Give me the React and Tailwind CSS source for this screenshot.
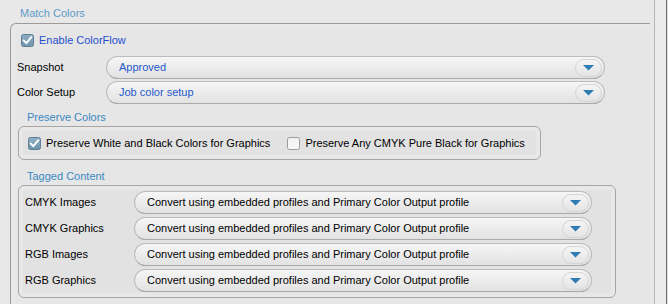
import React from "react";

const font = { fontFamily: '"Liberation Sans", Arial, sans-serif' };

function Check({ checked }) {
  if (checked) {
    return (
      <svg width="13" height="13" viewBox="0 0 13 13" className="shrink-0">
        <defs>
          <linearGradient id="cbg" x1="0" y1="0" x2="0" y2="1">
            <stop offset="0" stopColor="#8eafc4" />
            <stop offset="1" stopColor="#6f95ae" />
          </linearGradient>
        </defs>
        <rect x="0.5" y="0.5" width="12" height="12" rx="2" fill="url(#cbg)" stroke="#5e7f96" />
        <path d="M2.8 6.6 L5.3 9.1 L10.2 3.4" fill="none" stroke="#ffffff" strokeWidth="1.9" strokeLinecap="square" />
      </svg>
    );
  }
  return (
    <svg width="13" height="13" viewBox="0 0 13 13" className="shrink-0">
      <defs>
        <linearGradient id="cbu" x1="0" y1="0" x2="0" y2="1">
          <stop offset="0" stopColor="#f0f0f0" />
          <stop offset="1" stopColor="#fafafa" />
        </linearGradient>
      </defs>
      <rect x="0.5" y="0.5" width="12" height="12" rx="2" fill="url(#cbu)" stroke="#9c9c9c" />
    </svg>
  );
}

function Dropdown({ text, blue, width }) {
  return (
    <div
      className={`h-[23px] rounded-full border border-[#bcbcbc] border-b-[#aaaaaa] bg-gradient-to-b from-[#f6f6f6] to-[#e2e2e2] flex items-center pl-[12px] pr-[2px] ${width}`}
    >
      <span className={`flex-1 text-[11px] leading-none ${blue ? "text-[#2459cc]" : "text-[#000000]"}`}>{text}</span>
      <div className="w-[27px] h-[18px] rounded-full border border-[#d4d4d4] bg-gradient-to-b from-[#f5f5f5] to-[#e4e4e4] flex items-center justify-center">
        <svg width="11" height="6" viewBox="0 0 11 6">
          <path d="M0 0 H11 L5.5 5.5 Z" fill="#2f7cb3" />
        </svg>
      </div>
    </div>
  );
}

export default function App() {
  return (
    <div className="w-[668px] h-[304px] bg-[#e8e8e8] flex overflow-hidden" style={font}>
      <div className="w-[650px] h-full overflow-hidden pl-[10px] shrink-0">
        <div className="h-[23px] pl-[10px] pt-[7px] text-[11px] leading-[13px] text-[#5d9bc9]">Match Colors</div>
        <div className="w-[660px] h-[400px] border-l border-t border-[#9a9a9a] rounded-tl-[6px] bg-[#e8e8e8]">
          <div className="ml-[5px] mt-[5px] h-[395px] bg-[#e6e6e6]">
            <div className="pt-[5px] pl-[5px] flex items-center gap-[5px] h-[13px] box-content">
              <Check checked />
              <span className="text-[11px] leading-none text-[#1f4fcc]">Enable ColorFlow</span>
            </div>
            <div className="mt-[9px] flex items-center">
              <span className="w-[90px] pl-[1px] text-[11px] leading-none text-black">Snapshot</span>
              <Dropdown text="Approved" blue width="w-[499px]" />
            </div>
            <div className="mt-[2px] flex items-center">
              <span className="w-[90px] pl-[1px] text-[11px] leading-none text-black">Color Setup</span>
              <Dropdown text="Job color setup" blue width="w-[499px]" />
            </div>
            <div className="h-[22px] pt-[7px] pl-[11px] text-[11px] leading-[13px] text-[#3a88c2]">Preserve Colors</div>
            <div className="ml-[2px] w-[523px] h-[34px] border border-[#a6a6a6] rounded-[6px] bg-[#e8e8e8] p-[4px]">
              <div className="h-full bg-[#e2e2e2] flex items-center pl-[5px]">
                <Check checked />
                <span className="ml-[5px] text-[11px] leading-none text-black">Preserve White and Black Colors for Graphics</span>
                <div className="ml-[17px] flex items-center">
                  <Check checked={false} />
                  <span className="ml-[5px] text-[11px] leading-none text-black">Preserve Any CMYK Pure Black for Graphics</span>
                </div>
              </div>
            </div>
            <div className="h-[25px] pt-[10px] pl-[11px] text-[11px] leading-[13px] text-[#3a88c2]">Tagged Content</div>
            <div className="ml-[2px] w-[598px] h-[113px] border border-[#a6a6a6] rounded-[6px] bg-[#e8e8e8] p-[4px]">
              <div className="h-full bg-[#e2e2e2] pt-[1px] flex flex-col gap-[3px]">
                {["CMYK Images", "CMYK Graphics", "RGB Images", "RGB Graphics"].map((l) => (
                  <div key={l} className="flex items-center">
                    <span className="w-[111px] pl-[2px] text-[11px] leading-none text-black">{l}</span>
                    <Dropdown text="Convert using embedded profiles and Primary Color Output profile" width="w-[458px]" />
                  </div>
                ))}
              </div>
            </div>
          </div>
        </div>
      </div>
      <div className="w-[4px] shrink-0" />
      <div className="w-[1px] h-full bg-[#b6b6b6] shrink-0" />
      <div className="w-[11px] h-full bg-[#ebebeb] shrink-0" />
      <div className="w-[1px] h-full bg-[#707070] shrink-0" />
      <div className="w-[1px] h-full bg-[#dcdcdc] shrink-0" />
    </div>
  );
}
